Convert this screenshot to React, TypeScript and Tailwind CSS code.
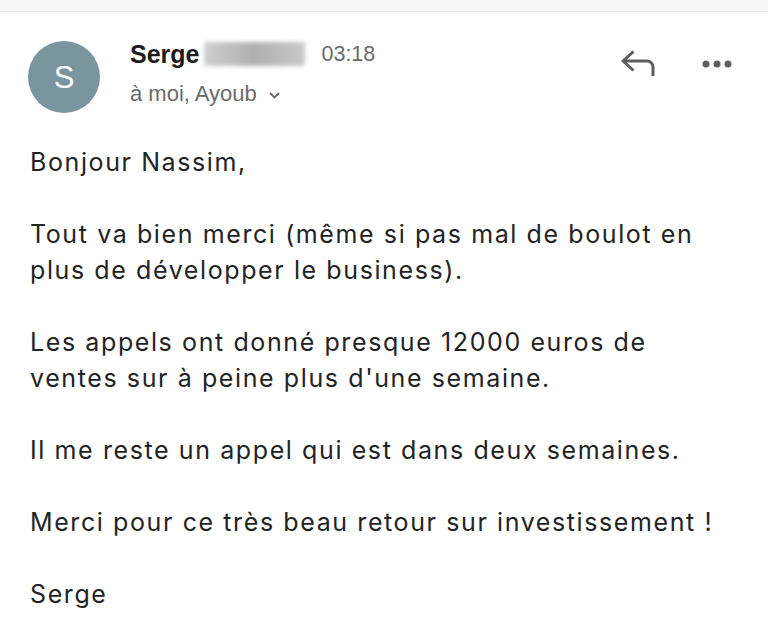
import React from "react";

const lines: string[][] = [
  ["Bonjour Nassim,"],
  ["Tout va bien merci (même si pas mal de boulot en", "plus de développer le business)."],
  ["Les appels ont donné presque 12000 euros de", "ventes sur à peine plus d'une semaine."],
  ["Il me reste un appel qui est dans deux semaines."],
  ["Merci pour ce très beau retour sur investissement !"],
  ["Serge"],
];

function ReplyIcon() {
  return (
    <svg width="34" height="27" viewBox="0 0 34 27" fill="none">
      <path
        d="M12.5 1.5 L2 11 L12.5 20.5 M2 11 H26 A6 6 0 0 1 32 17 V26"
        stroke="#5e5e5e"
        strokeWidth="3"
        strokeLinejoin="round"
      />
    </svg>
  );
}

function DotsIcon() {
  return (
    <svg width="30" height="8" viewBox="0 0 30 8" fill="#5e5e5e">
      <circle cx="4" cy="4" r="3.5" />
      <circle cx="15" cy="4" r="3.5" />
      <circle cx="26" cy="4" r="3.5" />
    </svg>
  );
}

export default function App() {
  return (
    <div className="w-[768px] h-[621px] bg-white overflow-hidden font-['Liberation_Sans',Arial,sans-serif]">
      <div className="h-[12px] bg-[#f8f8f8] border-b border-[#e4e4e4]" />

      {/* header */}
      <div className="flex items-start pl-[28px] pr-[36px] pt-[29px]">
        <div className="w-[72px] h-[72px] rounded-full bg-[#7b959f] flex items-center justify-center text-white text-[31px] leading-none shrink-0">
          S
        </div>
        <div className="ml-[30px] -mt-[2px] flex flex-col">
          <div className="flex items-center h-[30px]">
            <span className="text-[25px] font-bold text-[#1c1c1c] leading-[30px]">Serge</span>
            <span className="ml-[5px] w-[101px] h-[24px] rounded-[2px] bg-gradient-to-r from-[#cfcfcf] via-[#b0b0b0] to-[#c9c9c9] blur-[2px]" />
            <span className="ml-[16px] text-[21.5px] text-[#6a6a6a] leading-[30px]">03:18</span>
          </div>
          <div className="flex items-center mt-[10px] h-[30px]">
            <span className="text-[22px] text-[#6a6a6a] leading-[30px]">à moi, Ayoub</span>
            <svg className="ml-[12px] mt-[2px]" width="11" height="7" viewBox="0 0 11 7" fill="none">
              <path d="M1 1 L5.5 5.5 L10 1" stroke="#6a6a6a" strokeWidth="1.8" />
            </svg>
          </div>
        </div>
        <div className="ml-auto mt-[9px] flex items-center gap-[47px]">
          <ReplyIcon />
          <DotsIcon />
        </div>
      </div>

      {/* body */}
      <div className="pl-[30px] mt-[31px] flex flex-col gap-[36px] font-['Inter',sans-serif] text-[25px] leading-[36px] tracking-[1.6px] text-[#232323]">
        {lines.map((para, i) => (
          <div key={i}>
            {para.map((l, j) => (
              <div key={j} className="whitespace-nowrap">
                {l}
              </div>
            ))}
          </div>
        ))}
      </div>
    </div>
  );
}
